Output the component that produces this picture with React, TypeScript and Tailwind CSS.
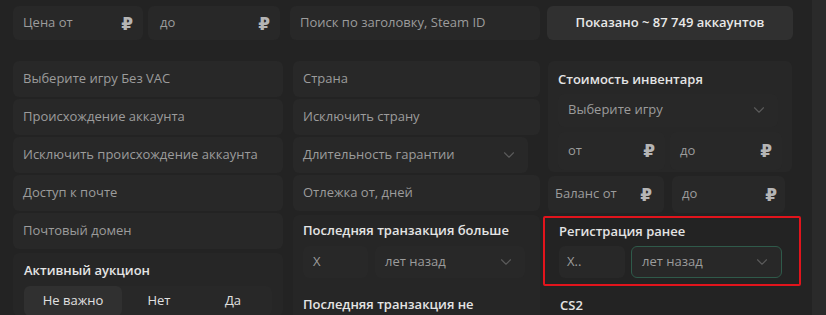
import { ChevronDown } from "lucide-react";

const font = { fontFamily: "'Open Sans', 'DejaVu Sans', sans-serif" };

function Ruble() {
  return <span className="text-[17px] font-bold text-[#b5b5b5] leading-none">₽</span>;
}

function Field({ text, className = "", ruble = false, chevron = false }: { text: string; className?: string; ruble?: boolean; chevron?: boolean }) {
  return (
    <div className={`flex shrink-0 items-center justify-between rounded-md bg-[#282828] px-[10px] text-[13px] text-[#9c9c9c] ${className}`}>
      <span className="whitespace-nowrap">{text}</span>
      {ruble && <Ruble />}
      {chevron && <ChevronDown size={18} strokeWidth={1.5} className="text-[#5a5a5a]" />}
    </div>
  );
}

function Label({ text }: { text: string }) {
  return <div className="text-[13px] font-semibold text-[#e4e4e4] whitespace-nowrap">{text}</div>;
}

export default function App() {
  return (
    <div style={font} className="relative flex h-[315px] w-[826px] overflow-hidden bg-[#232323]">
      <div className="flex flex-1 flex-col">
        {/* top row */}
        <div className="mt-[6px] flex h-[34px] shrink-0 items-stretch">
          <Field text="Цена от" ruble className="ml-[13px] w-[130px]" />
          <Field text="до" ruble className="ml-[5px] w-[132px] pl-[12px]" />
          <Field text="Поиск по заголовку, Steam ID" className="ml-[10px] w-[250px]" />
          <div className="ml-[7px] flex w-[246px] items-center justify-center rounded-md bg-[#303030] text-[13px] font-semibold text-[#e8e8e8]">
            Показано ~ 87 749 аккаунтов
          </div>
        </div>

        <div className="mt-[21px] flex shrink-0">
          {/* column 1 */}
          <div className="ml-[13px] flex w-[270px] flex-col gap-[2px]">
            <Field text="Выберите игру Без VAC" className="h-[36px]" />
            <Field text="Происхождение аккаунта" className="h-[36px]" />
            <Field text="Исключить происхождение аккаунта" className="h-[36px]" />
            <Field text="Доступ к почте" className="h-[36px]" />
            <Field text="Почтовый домен" className="h-[36px] text-[#8c8c8c]" />
            <div className="mt-[2px] rounded-md bg-[#262626] px-[11px] pt-[8px]">
              <Label text="Активный аукцион" />
              <div className="mt-[5px] flex h-[30px] rounded-md bg-[#282828] text-[13px] text-[#e0e0e0]">
                <div className="flex w-[98px] items-center justify-center rounded-md bg-[#303030]">Не важно</div>
                <div className="flex w-[74px] items-center justify-center">Нет</div>
                <div className="flex w-[74px] items-center justify-center">Да</div>
              </div>
            </div>
          </div>

          {/* column 2 */}
          <div className="ml-[10px] flex w-[247px] flex-col gap-[2px]">
            <Field text="Страна" className="h-[36px]" />
            <Field text="Исключить страну" className="h-[36px]" />
            <Field text="Длительность гарантии" chevron className="mr-[12px] h-[36px]" />
            <Field text="Отлежка от, дней" className="h-[36px]" />
            <div className="mt-[2px] rounded-md bg-[#262626] px-[10px] pt-[6px] pb-[8px]">
              <Label text="Последняя транзакция больше" />
              <div className="mt-[5px] flex h-[32px] gap-[7px]">
                <Field text="X" className="w-[65px] pl-[10px] text-[#7c7c7c]" />
                <Field text="лет назад" chevron className="w-[150px]" />
              </div>
              <div className="mt-[17px]">
                <Label text="Последняя транзакция не" />
              </div>
            </div>
          </div>

          {/* column 3 */}
          <div className="ml-[8px] flex w-[252px] flex-col">
            <div className="w-[244px] rounded-md bg-[#272727] px-[10px] pt-[9px] pb-[2px]">
              <Label text="Стоимость инвентаря" />
              <Field text="Выберите игру" chevron className="mt-[4px] h-[33px] w-[220px]" />
              <div className="mt-[5px] flex h-[38px] gap-[5px]">
                <Field text="от" ruble className="w-[107px]" />
                <Field text="до" ruble className="w-[112px]" />
              </div>
            </div>
            <div className="mt-[4px] flex h-[37px] gap-[8px]">
              <Field text="Баланс от" ruble className="w-[116px] pl-[7px] pr-[12px]" />
              <Field text="до" ruble className="w-[113px] pr-[8px]" />
            </div>
            <div className="mt-[3px] -ml-[5px] w-[258px] rounded-[2px] border-[2.5px] border-[#e1141c] px-[14px] pt-[4px] pb-[6px]">
              <Label text="Регистрация ранее" />
              <div className="mt-[5px] flex h-[32px] gap-[6px]">
                <Field text="X.." className="w-[66px] bg-[#262626] pl-[8px] text-[#7c7c7c]" />
                <Field text="лет назад" chevron className="w-[151px] border-[1.5px] border-[#2f5a4a]" />
              </div>
            </div>
            <div className="mt-[10px] px-[12px]">
              <Label text="CS2" />
            </div>
          </div>
        </div>
      </div>
      <div className="w-[14px] bg-[#2a2a2a]" />
    </div>
  );
}
